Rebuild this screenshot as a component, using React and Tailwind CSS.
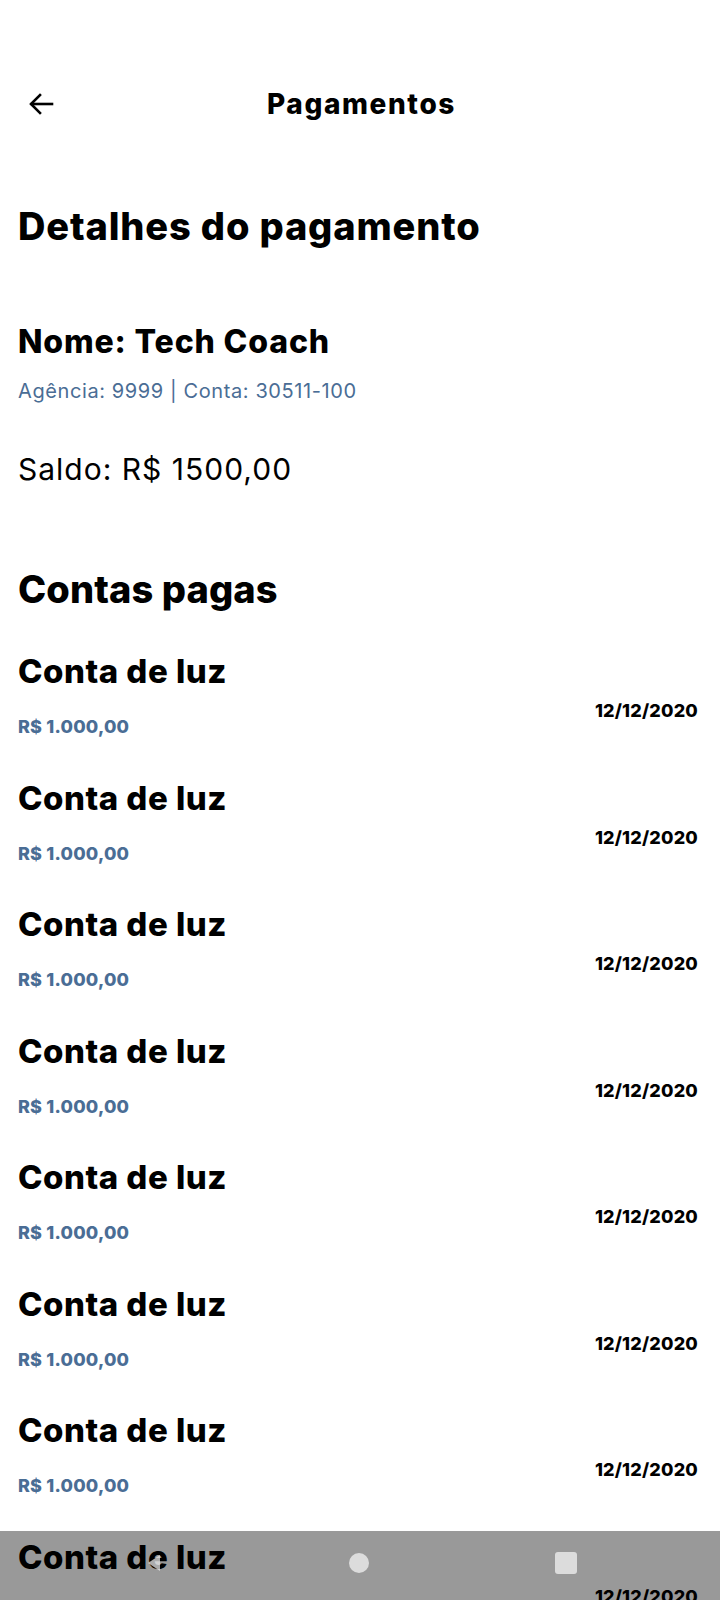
import React from "react";

const items = Array.from({ length: 8 });

export default function App() {
  return (
    <div
      className="relative w-[720px] h-[1600px] overflow-hidden bg-white text-black"
      style={{ fontFamily: "Inter, 'Noto Sans', sans-serif" }}
    >
      <div className="mt-[76px] h-[56px] relative flex items-center justify-center">
        <svg
          className="absolute left-[28px] top-[16px]"
          width="26"
          height="24"
          viewBox="0 0 26 24"
          fill="none"
          stroke="black"
          strokeWidth="2.6"
          strokeLinecap="square"
        >
          <path d="M24 12H4" />
          <path d="M12 3L3 12L12 21" />
        </svg>
        <span className="ml-[3px] text-[28px] font-extrabold tracking-[1.6px]">Pagamentos</span>
      </div>

      <div className="px-[18px]">
        <h1 className="mt-[72px] text-[38px] leading-[44px] font-extrabold tracking-[0.85px]">
          Detalhes do pagamento
        </h1>
        <div className="mt-[74px] text-[32px] leading-[40px] font-extrabold tracking-[0.85px]">
          Nome: Tech Coach
        </div>
        <div className="mt-[17px] text-[20px] leading-[24px] tracking-[0.6px] text-[#4a6d95]">
          Agência: 9999 | Conta: 30511-100
        </div>
        <div className="mt-[48px] text-[30px] leading-[36px] tracking-[1px]">Saldo: R$ 1500,00</div>
        <h2 className="mt-[80px] text-[38px] leading-[44px] font-extrabold tracking-[0.1px]">
          Contas pagas
        </h2>

        <div className="mt-[40px] pr-[4px]">
          {items.map((_, i) => (
            <div key={i} className="h-[126.5px] flex justify-between">
              <div className="flex flex-col">
                <div className="text-[33px] leading-[40px] font-extrabold tracking-[0.5px]">Conta de luz</div>
                <div className="mt-[24px] text-[18px] leading-[24px] font-extrabold tracking-[0.2px] text-[#4a6d95]">
                  R$ 1.000,00
                </div>
              </div>
              <div className="pt-[48px] text-[18px] leading-[24px] font-extrabold tracking-[0.2px]">
                12/12/2020
              </div>
            </div>
          ))}
        </div>
      </div>

      <div className="absolute left-0 right-0 bottom-0 h-[69px] bg-black/40">
        <svg className="absolute left-[146px] top-[22px]" width="16" height="20" viewBox="0 0 16 20">
          <path d="M14 2 L2 10 L14 18 Z" fill="rgba(230,230,230,0.75)" />
        </svg>
        <div className="absolute left-[349px] top-[22px] w-[20px] h-[20px] rounded-full bg-[#dcdcdc]" />
        <div className="absolute left-[555px] top-[21px] w-[22px] h-[22px] rounded-[3px] bg-[#dcdcdc]" />
      </div>
    </div>
  );
}
